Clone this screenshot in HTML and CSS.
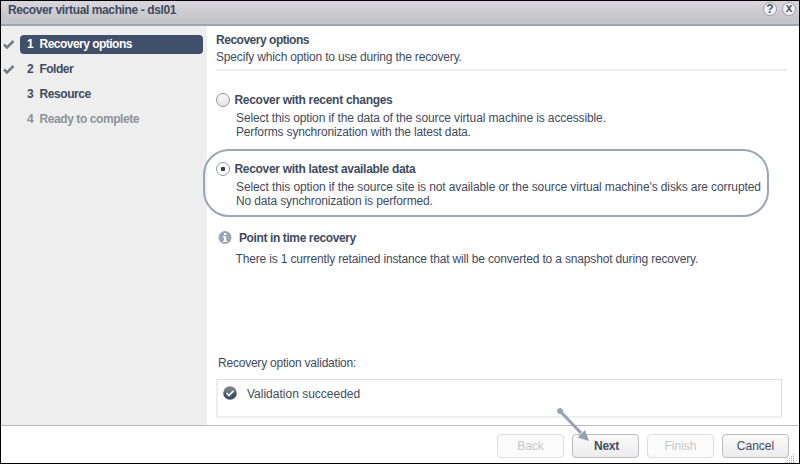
FILE: index.html
```html
<!DOCTYPE html>
<html lang="en">
<head>
<meta charset="utf-8">
<title>Recover virtual machine - dsl01</title>
<link rel="stylesheet" href="styles.css">
</head>
<body>
<div class="window">
  <header class="titlebar">
    <h1 class="title">Recover virtual machine - dsl01</h1>
    <div class="tools"><span class="tool">?</span><span class="tool tool-close">x</span></div>
  </header>
  <div class="body">
    <nav class="steps">
      <div class="step"><svg class="check" viewBox="0 0 14 12"><path d="M2 6.5 5 9.5 11.5 3"/></svg><div class="pill active"><b>1</b><span class="s1">Recovery options</span></div></div>
      <div class="step"><svg class="check" viewBox="0 0 14 12"><path d="M2 6.5 5 9.5 11.5 3"/></svg><div class="pill"><b>2</b><span class="s1">Folder</span></div></div>
      <div class="step"><i class="check"></i><div class="pill"><b>3</b><span class="s4">Resource</span></div></div>
      <div class="step"><i class="check"></i><div class="pill pending"><b>4</b><span class="s4">Ready to complete</span></div></div>
    </nav>
    <main class="content">
      <div class="heading">
        <h2>Recovery options</h2>
        <p class="sub">Specify which option to use during the recovery.</p>
      </div>
      <section class="option">
        <div class="option-head"><i class="radio"></i><b class="o1">Recover with recent changes</b></div>
        <p class="l1">Select this option if the data of the source virtual machine is accessible.</p>
        <p class="l2">Performs synchronization with the latest data.</p>
      </section>
      <section class="option highlight">
        <div class="option-head"><i class="radio on"></i><b class="o2">Recover with latest available data</b></div>
        <p class="l3">Select this option if the source site is not available or the source virtual machine's disks are corrupted</p>
        <p class="l4">No data synchronization is performed.</p>
      </section>
      <section class="point">
        <div class="point-head"><svg width="14" height="14" viewBox="0 0 14 14"><circle cx="7" cy="6.5" r="6.5" fill="#9ba5b4"/><path d="M6 2h2.200v2H6zM5 5.200h3.200v4.500H9v1.200H5V9.700h1V6.400H5z" fill="#fff"/></svg><b class="o3">Point in time recovery</b></div>
        <p class="l5">There is 1 currently retained instance that will be converted to a snapshot during recovery.</p>
      </section>
      <section class="validation">
        <p class="l6">Recovery option validation:</p>
        <div class="result"><svg width="14" height="14" viewBox="0 0 14 14"><defs><linearGradient id="g" x2="0" y2="1"><stop offset=".3" stop-color="#777d87"/><stop offset=".6" stop-color="#41506a"/></linearGradient></defs><circle cx="7" cy="7" r="6.8" fill="url(#g)"/><path d="M3.5 7 6 9.4 10.5 4.8" fill="none" stroke="#f4f4f4" stroke-width="1.8"/></svg><span class="l7">Validation succeeded</span></div>
      </section>
    </main>
  </div>
  <footer class="footer">
    <button class="btn" disabled>Back</button>
    <button class="btn primary">Next</button>
    <button class="btn" disabled>Finish</button>
    <button class="btn">Cancel</button>
  </footer>
  <svg class="grip" viewBox="0 0 10 10"><path d="M8 1.500h2M6 3.500h4M4 5.500h6M2 7.500h8M0 9.500h10" /></svg>
  <svg class="arrow" viewBox="0 0 36 36"><circle cx="5" cy="5" r="2.500"/><path d="M5 5 26 27" stroke-width="3"/><path d="M34 35 22.500 31.500 30 24z" stroke="none"/></svg>
</div>
</body>
</html>
```

FILE: styles.css
```css
* { box-sizing: border-box; }
body { margin: 0; font: 12px/14px "Liberation Sans", Arial, sans-serif; color: #3f4b60; background: #fff; }
h1, h2, p { margin: 0; font-size: 12px; white-space: nowrap; }
.window { position: relative; display: flex; flex-direction: column; width: 800px; height: 464px; border: 1px solid #000; overflow: hidden; }
.titlebar { display: flex; justify-content: space-between; flex: none; height: 25px; padding: 0 3px 0 7px; background: linear-gradient(#d9d6dd, #c5c5c8 80%); border-bottom: 2px solid #9ca5b6; }
.title { line-height: 18px; letter-spacing: -.39px; }
.tools { display: flex; gap: 5px; }
.tool { width: 14px; height: 14px; margin-top: 1px; border: 1px solid #9aa0aa; border-radius: 50%; background: #f0f0f0; text-align: center; font: bold 12px/12px "Liberation Sans", sans-serif; color: #555b68; }
.tool-close { line-height: 10px; }
.body { display: flex; height: 399px; flex: none; }
.steps { width: 206px; padding-top: 9px; background: #eee; }
.step { display: flex; height: 25px; }
.check { width: 14px; height: 12px; margin: 3px 4px 0 1px; fill: none; stroke: #777c84; stroke-width: 2.5; }
.pill { display: flex; width: 183px; height: 19px; padding-left: 7px; border-radius: 4px; font-weight: bold; line-height: 19px; }
.pill b { width: 12.5px; }
.active { background: #41506a; color: #fff; }
.pending { color: #8d929c; }
.s1 { letter-spacing: -.52px; }
.s4 { letter-spacing: -.42px; }
.content { flex: 1; padding: 7px 0 0 9px; }
.heading { width: 571px; height: 38px; border-bottom: 2px solid #eee; }
.heading h2 { letter-spacing: -.48px; }
.sub { margin-top: 3px; letter-spacing: -.17px; }
.option { height: 57px; margin-top: 21px; padding-left: 20px; }
.option-head { display: flex; align-items: center; gap: 4.5px; height: 15px; margin: 0 0 5px -20px; }
.option p { line-height: 13.5px; }
.radio { width: 14px; height: 14px; border: 1px solid #92979f; border-radius: 50%; background: linear-gradient(#f8f8f8, #e5e5e5); }
.radio.on { background: radial-gradient(circle, #344052 0 2px, #fff 2.5px); }
.highlight { width: 566px; height: 68px; margin: 0 0 0 -13px; padding: 10px 0 0 31px; border: 2px solid #9ba5b6; border-radius: 26px; }
.o1 { letter-spacing: -.3px; }
.o2 { letter-spacing: -.31px; }
.o3 { letter-spacing: -.39px; }
.l1 { letter-spacing: -.12px; }
.l2 { letter-spacing: -.16px; }
.l3 { letter-spacing: -.104px; }
.l4 { letter-spacing: -.145px; }
.point { margin: 14px 0 0 2px; }
.point-head { display: flex; gap: 7px; align-items: center; height: 14px; }
.l5 { margin: 7px 0 0 17.5px; letter-spacing: -.16px; }
.validation { margin-top: 90px; }
.l6 { margin-left: 2px; letter-spacing: -.22px; }
.result { display: flex; gap: 10px; width: 566px; height: 39px; margin-top: 9px; padding: 6px 0 0 5px; border: 2px solid #eee; border-top: 1px solid #ddd; border-right: 1px solid #ddd; }
.l7 { line-height: 17px; }
.footer { display: flex; justify-content: flex-end; gap: 8px; flex: 1; padding: 8px 10px 4px 0; border-top: 1px solid #bbb; }
.btn { width: 67px; height: 24px; padding: 0; border: 1px solid #b9bcc3; border-radius: 4px; background: linear-gradient(#fafafa, #ececec); color: #3f4b60; font: 12px/14px "Liberation Sans", sans-serif; }
.btn:disabled { border-color: #ddd; background: #fbfbfb; color: #c4c7cc; }
.btn.primary { font-weight: bold; padding-left: 2px; letter-spacing: -.3px; }
.grip { position: absolute; right: 4px; bottom: 0; width: 10px; height: 10px; stroke: #aaa; stroke-dasharray: 1 1; }
.arrow { position: absolute; left: 554px; top: 405px; width: 36px; height: 36px; fill: #97a1b2; stroke: #97a1b2; }
```
